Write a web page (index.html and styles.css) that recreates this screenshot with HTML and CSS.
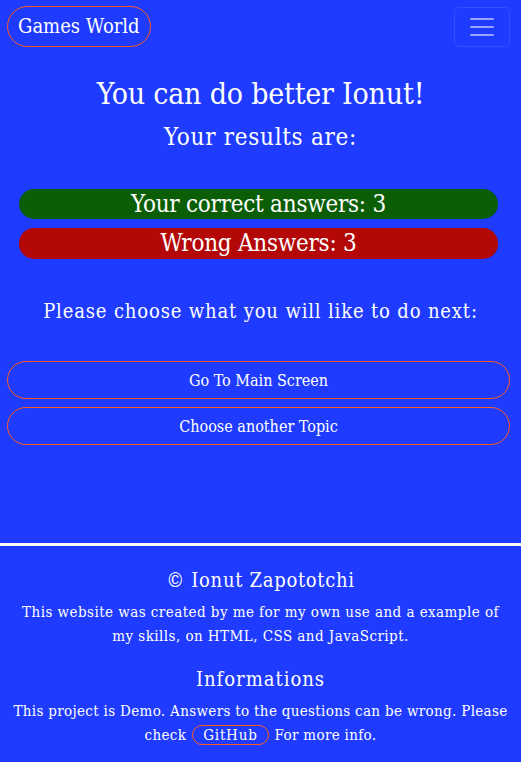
FILE: index.html
```html
<!DOCTYPE html>
<html lang="en">
<head>
<meta charset="utf-8">
<title>Games World - Results</title>
<link rel="stylesheet" href="styles.css">
</head>
<body>
<header class="navbar">
  <a class="brand" href="#">Games World</a>
  <button class="toggler" type="button" aria-label="Toggle navigation">
    <svg class="toggler-icon" viewBox="0 0 30 30" width="30" height="30"><path d="M4 7h22M4 15h22M4 23h22" stroke="rgba(255,255,255,0.55)" stroke-width="2" stroke-linecap="round" fill="none"/></svg>
  </button>
</header>
<main class="results">
  <h1 class="title">You can do better Ionut!</h1>
  <h2 class="subtitle">Your results are:</h2>
  <div class="score score-correct">Your correct answers: 3</div>
  <div class="score score-wrong">Wrong Answers: 3</div>
  <p class="prompt">Please choose what you will like to do next:</p>
  <div class="actions">
    <button class="action" type="button">Go To Main Screen</button>
    <button class="action" type="button">Choose another Topic</button>
  </div>
</main>
<footer class="footer">
  <h3 class="footer-title">© Ionut Zapototchi</h3>
  <p class="footer-text">This website was created by me for my own use and a example of my skills, on HTML, CSS and JavaScript.</p>
  <h3 class="footer-title footer-title-info">Informations</h3>
  <p class="footer-text footer-text-info">This project is Demo. Answers to the questions can be wrong. Please check<a class="pill" href="#">GitHub</a>For more info.</p>
</footer>
</body>
</html>
```
FILE: styles.css
```css
* { box-sizing: border-box; }
html, body { margin: 0; padding: 0; }
body {
  background: #1e3bff;
  color: #fff;
  font-family: "DejaVu Serif Condensed", "Liberation Serif", serif;
  min-height: 762px;
}
.navbar {
  display: flex;
  justify-content: space-between;
  align-items: flex-start;
  padding: 6px 11px 0 7px;
}
.brand {
  display: block;
  height: 41px;
  line-height: 39px;
  padding: 0 10px;
  border: 1px solid #ff5a1f;
  border-radius: 21px;
  color: #fff;
  font-size: 20px;
  text-decoration: none;
}
.toggler {
  display: flex;
  align-items: center;
  justify-content: center;
  margin-top: 1px;
  width: 56px;
  height: 40px;
  padding: 0;
  background: transparent;
  border: 1px solid rgba(255,255,255,0.1);
  border-radius: 5px;
}
.toggler-icon { display: block; }
.results {
  display: flex;
  flex-direction: column;
  padding-top: 28px;
  height: 496px;
}
.title {
  margin: 0;
  font-size: 30px;
  font-weight: normal;
  line-height: 38px;
  letter-spacing: -0.2px;
  text-align: center;
}
.subtitle {
  margin: 9px 0 0;
  font-size: 24px;
  font-weight: normal;
  line-height: 30px;
  letter-spacing: 0.7px;
  text-align: center;
}
.score {
  margin: 0 23px 0 19px;
  height: 30px;
  line-height: 30px;
  border-radius: 15px;
  font-size: 24px;
  letter-spacing: -0.25px;
  text-align: center;
}
.score-correct { margin-top: 37px; background: #0b5e06; }
.score-wrong { margin-top: 9px; height: 31px; line-height: 31px; background: #b40808; }
.prompt {
  margin: 40px 0 0;
  font-size: 20px;
  line-height: 24px;
  letter-spacing: 0.85px;
  text-align: center;
}
.actions {
  display: flex;
  flex-direction: column;
  gap: 8px;
  margin: 38px 11px 0 7px;
}
.action {
  height: 38px;
  border: 1px solid #ff5a1f;
  border-radius: 19px;
  background: transparent;
  color: #fff;
  font-family: inherit;
  font-size: 16px;
  cursor: pointer;
}
.footer {
  border-top: 3px solid #fff;
  padding: 0 12px 16px;
  text-align: center;
}
.footer-title {
  margin: 22px 0 0;
  font-size: 20px;
  font-weight: normal;
  line-height: 24px;
  letter-spacing: 0.7px;
}
.footer-title-info { margin-top: 19px; letter-spacing: 1px; }
.footer-text {
  margin: 9px 0 0;
  font-size: 15px;
  line-height: 23.5px;
  letter-spacing: 0.45px;
}
.footer-text-info { margin-top: 8px; line-height: 24px; letter-spacing: 0.33px; }
.pill {
  display: inline-block;
  padding: 0 10px;
  line-height: 18px;
  border: 1px solid #ff5a1f;
  border-radius: 11px;
  color: #fff;
  text-decoration: none;
  letter-spacing: 0.8px;
  margin: 0 6px;
}
```
